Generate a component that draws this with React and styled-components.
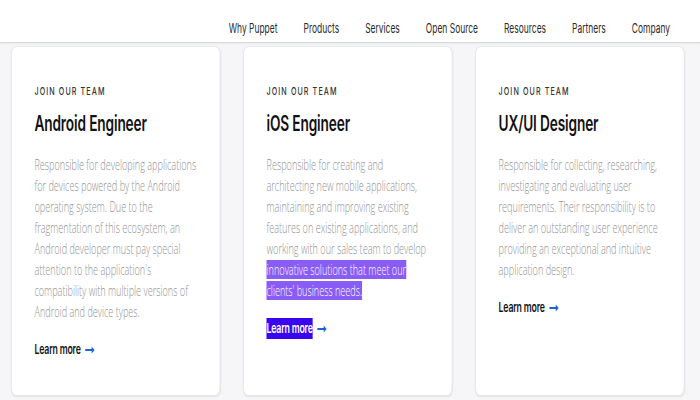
import React from 'react';
import styled, { createGlobalStyle } from 'styled-components';

// the design is drawn at its natural width and squeezed horizontally to fit the frame
const SQUEEZE = 0.65;
const FRAME_WIDTH = 700;

const GlobalStyle = createGlobalStyle`
  html, body {
    margin: 0;
    padding: 0;
    background: #f6f6f9;
    overflow: hidden;
  }
  body {
    font-family: Inter, "Liberation Sans", sans-serif;
  }
`;

const Page = styled.div`
  width: ${FRAME_WIDTH / SQUEEZE}px;
  height: 400px;
  transform: scaleX(${SQUEEZE});
  transform-origin: 0 0;
  background: #f6f6f9;
  display: flex;
  flex-direction: column;
`;

const Navbar = styled.nav`
  height: 43px;
  background: #fff;
  border-bottom: 1px solid #d6d9de;
  box-shadow: 0 1px 2px rgba(0, 0, 0, 0.06);
  display: flex;
  justify-content: flex-end;
  align-items: center;
  padding: 14px 46px 0 0;
  box-sizing: border-box;
  gap: 40px;
`;

const NavLink = styled.a`
  font-size: 13px;
  font-weight: 400;
  color: #2b2b2b;
  text-decoration: none;
  white-space: nowrap;
`;

const CardRow = styled.div`
  display: grid;
  grid-template-columns: repeat(3, 322px);
  gap: 35px;
  padding: 3px 0 0 17px;
`;

const Card = styled.article`
  background: #fff;
  border: 1px solid #e4e5ea;
  border-radius: 8px;
  box-shadow: 0 1px 2px rgba(0, 0, 0, 0.08);
  height: 350px;
  box-sizing: border-box;
  padding: 37px 34px 0 35px;
`;

const Eyebrow = styled.div`
  font-size: 11px;
  font-weight: 500;
  letter-spacing: 1.7px;
  color: #333;
  line-height: 14px;
`;

const Title = styled.h2`
  margin: 14px 0 0;
  font-size: 21px;
  font-weight: 600;
  color: #111;
  line-height: 24px;
  letter-spacing: -0.2px;
`;

const Body = styled.p`
  margin: 18px 0 0;
  font-family: "Open Sans", "Liberation Sans", sans-serif;
  font-size: 14px;
  font-weight: 300;
  line-height: 21px;
  color: #939393;
`;

const Selected = styled.span`
  background: ${p => (p.$strong ? '#3a06f2' : '#8a5cf6')};
  color: #fff;
`;

const LearnMore = styled.a`
  margin-top: 17px;
  display: inline-flex;
  align-items: center;
  gap: 7px;
  font-size: 13.5px;
  font-weight: 600;
  color: #141414;
  text-decoration: none;
  line-height: 21px;
  letter-spacing: -0.3px;
`;

const Arrow = () => (
  <svg width="15" height="8" viewBox="0 0 15 8" aria-hidden="true">
    <path d="M0 4h12" stroke="#1f63d8" strokeWidth="2" />
    <path d="M10 0.5L14.5 4 10 7.5z" fill="#1f63d8" />
  </svg>
);

const navItems = ['Why Puppet', 'Products', 'Services', 'Open Source', 'Resources', 'Partners', 'Company'];

const JobCard = ({ title, children, selectedLink }) => (
  <Card>
    <Eyebrow>JOIN OUR TEAM</Eyebrow>
    <Title>{title}</Title>
    <Body>{children}</Body>
    <LearnMore href="#">
      {selectedLink ? <Selected $strong>Learn more</Selected> : 'Learn more'}
      <Arrow />
    </LearnMore>
  </Card>
);

export default function App() {
  return (
    <>
      <GlobalStyle />
      <Page>
        <Navbar>
          {navItems.map(item => (
            <NavLink key={item} href="#">{item}</NavLink>
          ))}
        </Navbar>
        <CardRow>
          <JobCard title="Android Engineer">
            Responsible for developing applications for devices powered by the Android operating system.
            Due to the fragmentation of this ecosystem, an Android developer must pay special attention
            to the application's compatibility with multiple versions of Android and device types.
          </JobCard>
          <JobCard title="iOS Engineer" selectedLink>
            Responsible for creating and architecting new mobile applications, maintaining and improving
            existing features on existing applications, and working with our sales team to develop{' '}
            <Selected>innovative solutions that meet our clients' business needs.</Selected>
          </JobCard>
          <JobCard title="UX/UI Designer">
            Responsible for collecting, researching, investigating and evaluating user requirements.
            Their responsibility is to deliver an outstanding user experience providing an exceptional
            and intuitive application design.
          </JobCard>
        </CardRow>
      </Page>
    </>
  );
}
